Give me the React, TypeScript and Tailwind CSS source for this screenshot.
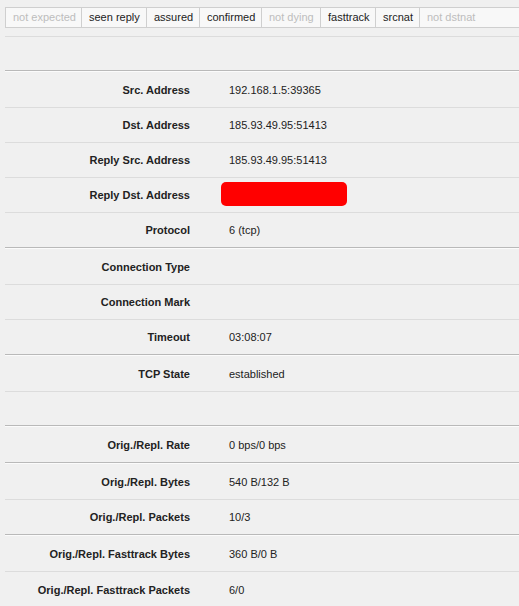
import React from 'react';

type Flag = { label: string; on: boolean; w: string };

const flags: Flag[] = [
  { label: 'not expected', on: false, w: 'w-[77px]' },
  { label: 'seen reply', on: true, w: 'w-[65px]' },
  { label: 'assured', on: true, w: 'w-[53px]' },
  { label: 'confirmed', on: true, w: 'w-[62px]' },
  { label: 'not dying', on: false, w: 'w-[59px]' },
  { label: 'fasttrack', on: true, w: 'w-[55px]' },
  { label: 'srcnat', on: true, w: 'w-[44px]' },
  { label: 'not dstnat', on: false, w: 'flex-1' },
];

const Separator = () => (
  <div>
    <div className="h-px bg-[#b9b9b9]" />
    <div className="h-px bg-[#fbfbfb]" />
  </div>
);

interface RowProps {
  label?: string;
  value?: React.ReactNode;
  last?: boolean;
  h?: string;
  pt?: string;
}

const Row: React.FC<RowProps> = ({ label, value, last, h = 'h-[35px]', pt = 'pt-px' }) => (
  <div className={`flex items-center ${pt} ${h} ${last ? '' : 'border-b border-[#dcdcdc]'}`}>
    <div className="w-[185px] text-right font-bold text-[#222]">{label}</div>
    <div className="pl-[39px] text-[#222]">{value}</div>
  </div>
);

export default function App() {
  return (
    <div
      className="min-h-[606px] bg-[#f0f0f0] pl-[5px] text-[11px] leading-[13px]"
      style={{ fontFamily: '"Liberation Sans", Arial, sans-serif' }}
    >
      {/* status flags */}
      <div className="h-[37px] pt-[7px] border-b border-[#dcdcdc]">
        <div className="flex h-[21px] border-y border-[#cfcfcf] bg-[#f8f8f8]">
          {flags.map((f, i) => (
            <div
              key={f.label}
              className={`${f.w} flex items-center pl-[7px] whitespace-nowrap ${i === 0 ? 'border-l' : ''} ${
                i < flags.length - 1 ? 'border-r' : ''
              } border-[#cfcfcf] ${f.on ? 'text-[#222]' : 'text-[#bdbdbd]'}`}
            >
              {f.label}
            </div>
          ))}
        </div>
      </div>
      <div className="h-[33px]" />

      <Separator />
      <Row label="Src. Address" value="192.168.1.5:39365" h="h-[36px]" pt="pt-[2px]" />
      <Row label="Dst. Address" value="185.93.49.95:51413" />
      <Row label="Reply Src. Address" value="185.93.49.95:51413" />
      <Row
        label="Reply Dst. Address"
        value={<div className="-ml-[8px] -mt-[4px] h-[24px] w-[126px] rounded-[5px] bg-[#ff0000]" />}
      />
      <Row label="Protocol" value="6 (tcp)" last h="h-[34px]" />

      <Separator />
      <Row label="Connection Type" h="h-[36px]" pt="pt-[2px]" />
      <Row label="Connection Mark" />
      <Row label="Timeout" value="03:08:07" last h="h-[34px]" />

      <Separator />
      <Row label="TCP State" value="established" h="h-[36px]" pt="pt-[2px]" />
      <Row last h="h-[33px]" />

      <Separator />
      <Row label="Orig./Repl. Rate" value="0 bps/0 bps" last h="h-[35px]" pt="pt-[2px]" />

      <Separator />
      <Row label="Orig./Repl. Bytes" value="540 B/132 B" h="h-[36px]" pt="pt-[2px]" />
      <Row label="Orig./Repl. Packets" value="10/3" last h="h-[34px]" />

      <Separator />
      <Row label="Orig./Repl. Fasttrack Bytes" value="360 B/0 B" h="h-[36px]" pt="pt-[2px]" />
      <Row label="Orig./Repl. Fasttrack Packets" value="6/0" last h="h-[35px]" />
    </div>
  );
}
